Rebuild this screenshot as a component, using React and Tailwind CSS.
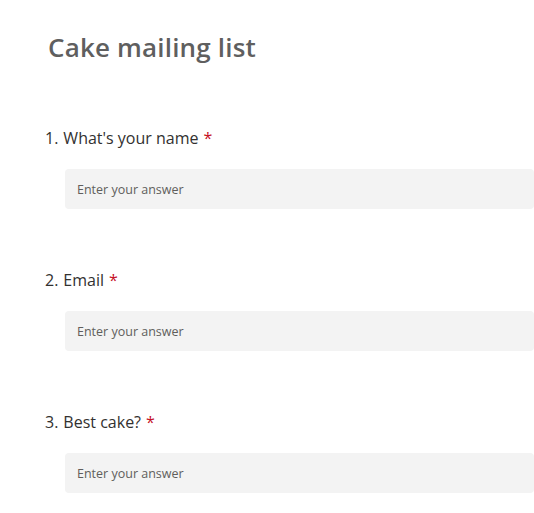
import React from 'react'

const preguntas = [
  { id: 1, texto: "What's your name" },
  { id: 2, texto: 'Email' },
  { id: 3, texto: 'Best cake?' },
]

function Pregunta({ numero, texto }) {
  return (
    <div className="pt-[29px] pb-[30px]">
      <div className="flex items-center h-[24px] text-[16px] text-[#323130]">
        <span>{numero}.</span>
        <span className="ml-[5px]">{texto}</span>
        <span className="ml-[5px] text-[#c50f1f]">*</span>
      </div>
      <div className="mt-[19px] ml-[20px]">
        <input
          type="text"
          placeholder="Enter your answer"
          className="w-full h-[40px] bg-[#f3f3f3] rounded-[4px] px-[12px] pt-[1px] text-[12.5px] text-[#323130] placeholder:text-[#605e5c] outline-none"
        />
      </div>
    </div>
  )
}

export default function App() {
  return (
    <div className="w-[534px] h-[513px] bg-white overflow-hidden font-['Segoe_UI','Open_Sans',sans-serif]">
      <h1 className="pl-[48px] pt-[29px] text-[26px] leading-[36px] tracking-[0.18px] font-semibold text-[#5f5f5f]">
        Cake mailing list
      </h1>
      <div className="pl-[45px] pt-[32px]">
        {preguntas.map(p => (
          <Pregunta key={p.id} numero={p.id} texto={p.texto} />
        ))}
      </div>
    </div>
  )
}
